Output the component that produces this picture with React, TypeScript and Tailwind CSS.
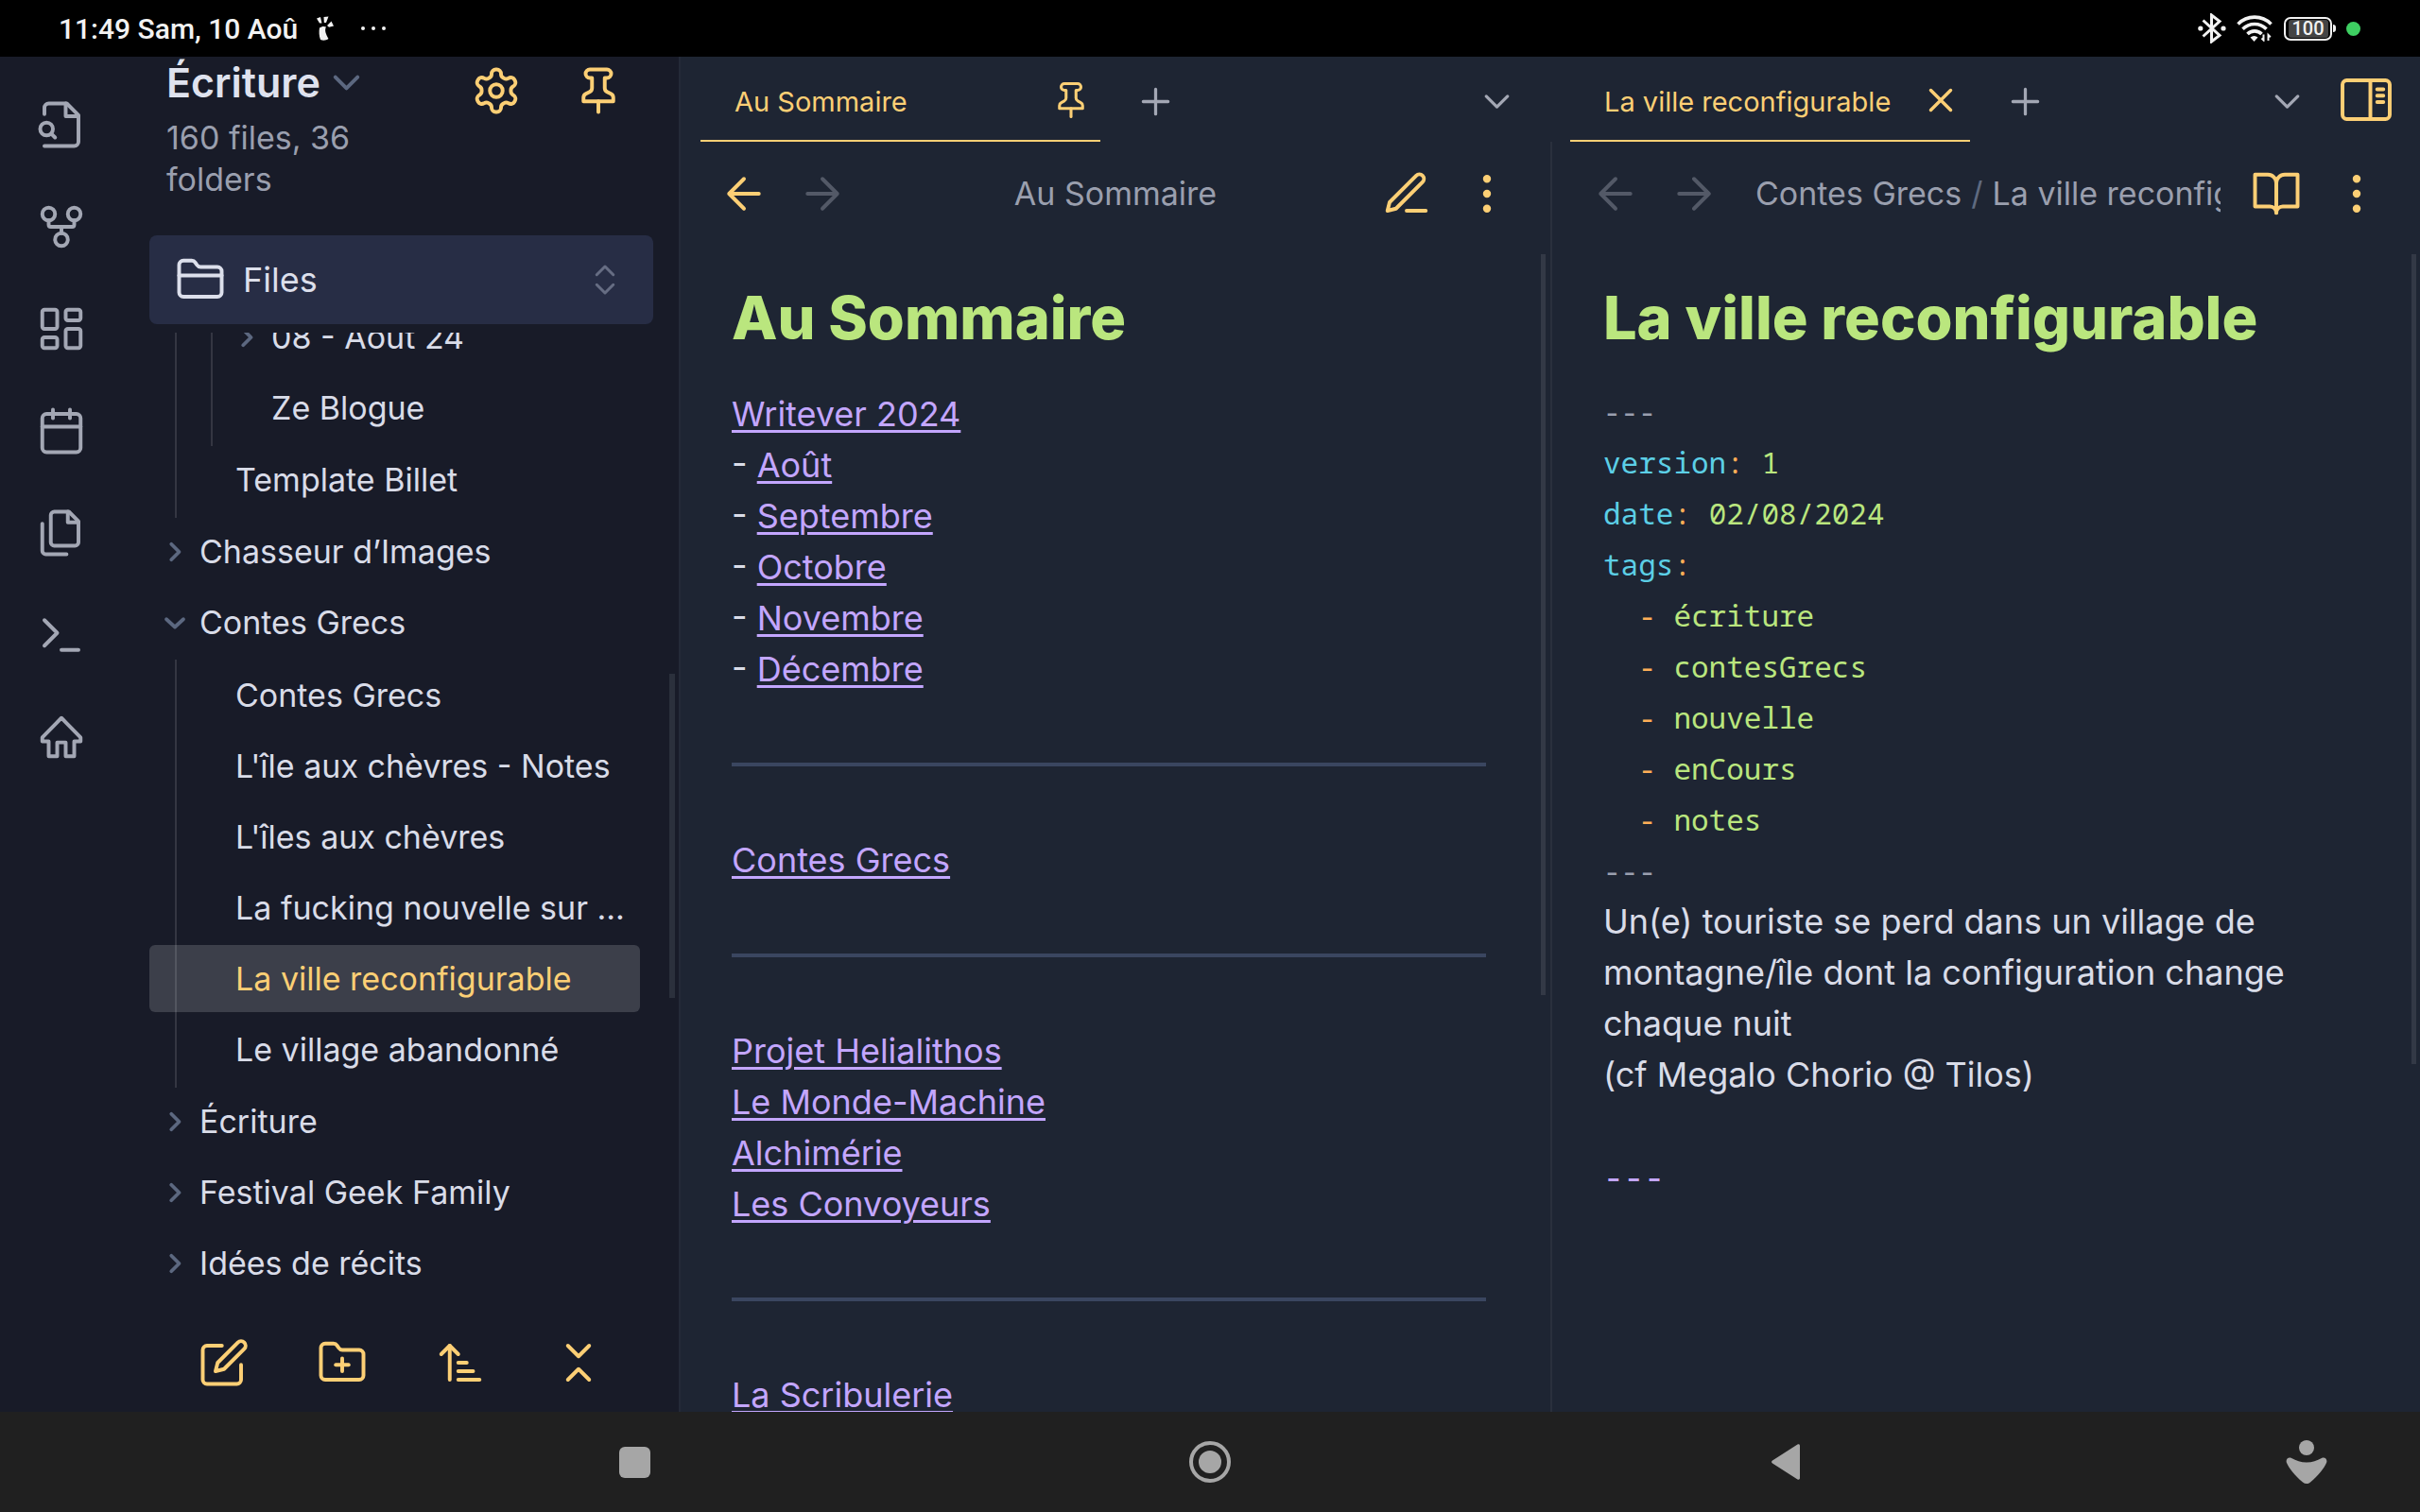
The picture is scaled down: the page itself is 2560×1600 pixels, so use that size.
import React from "react";

interface IIconProps {
  children: React.ReactNode;
  className?: string;
}

/**
 * 24-unit line icon, takes its colour from the parent
 */
function Icon({ children, className = "size-[54px]" }: IIconProps) {
  return (
    <svg
      viewBox="0 0 24 24"
      fill="none"
      stroke="currentColor"
      strokeWidth={1.75}
      strokeLinecap="round"
      strokeLinejoin="round"
      aria-hidden="true"
      className={`shrink-0 ${className}`}
    >
      {children}
    </svg>
  );
}

const pinPath = (
  <>
    <path d="M12 17v5" />
    <path d="M5 17h14v-1.76a2 2 0 0 0-1.11-1.79l-1.78-.9A2 2 0 0 1 15 10.76V6h1a2 2 0 0 0 0-4H8a2 2 0 0 0 0 4h1v4.76a2 2 0 0 1-1.11 1.79l-1.78.9A2 2 0 0 0 5 15.24Z" />
  </>
);

const ribbonItems = [
  {
    label: "Quick switcher",
    icon: (
      <>
        <path d="M4 22h14a2 2 0 0 0 2-2V7.5L14.5 2H6a2 2 0 0 0-2 2v3" />
        <path d="M14 2v6h6" />
        <path d="M5 17a3 3 0 1 0 0-6 3 3 0 0 0 0 6Z" />
        <path d="m9 18-1.5-1.5" />
      </>
    ),
  },
  {
    label: "Graph view",
    icon: (
      <>
        <circle cx="12" cy="18" r="3" />
        <circle cx="6" cy="6" r="3" />
        <circle cx="18" cy="6" r="3" />
        <path d="M18 9v2c0 .6-.4 1-1 1H7c-.6 0-1-.4-1-1V9" />
        <path d="M12 12v3" />
      </>
    ),
  },
  {
    label: "Canvas",
    icon: (
      <>
        <rect x="3" y="3" width="7" height="9" rx="1" />
        <rect x="14" y="3" width="7" height="5" rx="1" />
        <rect x="14" y="12" width="7" height="9" rx="1" />
        <rect x="3" y="16" width="7" height="5" rx="1" />
      </>
    ),
  },
  {
    label: "Daily note",
    icon: (
      <>
        <rect x="3" y="4" width="18" height="18" rx="2" />
        <path d="M16 2v4" />
        <path d="M8 2v4" />
        <path d="M3 10h18" />
      </>
    ),
  },
  {
    label: "Templates",
    icon: (
      <>
        <path d="M15.5 2H8.6c-.4 0-.8.2-1.1.5-.3.3-.5.7-.5 1.1v12.8c0 .4.2.8.5 1.1.3.3.7.5 1.1.5h9.8c.4 0 .8-.2 1.1-.5.3-.3.5-.7.5-1.1V6.5L15.5 2z" />
        <path d="M3 7.6v12.8c0 .4.2.8.5 1.1.3.3.7.5 1.1.5h9.8" />
        <path d="M15 2v5h5" />
      </>
    ),
  },
  {
    label: "Command palette",
    icon: (
      <>
        <path d="m4 17 6-6-6-6" />
        <path d="M12 19h8" />
      </>
    ),
  },
  {
    label: "Home",
    icon: <path d="M12 3 3 12.2V14h3v7h4v-6.5h4V21h4v-7h3v-1.8Z" />,
  },
];

const sidebarActions = [
  {
    label: "New note",
    icon: (
      <>
        <path d="M11 4H4a2 2 0 0 0-2 2v14a2 2 0 0 0 2 2h14a2 2 0 0 0 2-2v-7" />
        <path d="M18.5 2.5a2.12 2.12 0 0 1 3 3L12 15l-4 1 1-4Z" />
      </>
    ),
  },
  {
    label: "New folder",
    icon: (
      <>
        <path d="M4 20h16a2 2 0 0 0 2-2V8a2 2 0 0 0-2-2h-7.93a2 2 0 0 1-1.66-.9l-.82-1.2A2 2 0 0 0 7.93 3H4a2 2 0 0 0-2 2v13c0 1.1.9 2 2 2Z" />
        <path d="M12 10v6" />
        <path d="M9 13h6" />
      </>
    ),
  },
  {
    label: "Sort order",
    icon: (
      <>
        <path d="m3 8 4-4 4 4" />
        <path d="M7 4v16" />
        <path d="M11 12h4" />
        <path d="M11 16h7" />
        <path d="M11 20h10" />
      </>
    ),
  },
  {
    label: "Collapse all",
    icon: (
      <>
        <path d="m7 20 5-5 5 5" />
        <path d="m7 4 5 5 5-5" />
      </>
    ),
  },
];

function StatusBar() {
  return (
    <header className="flex h-[60px] shrink-0 items-center justify-between bg-black pr-[63px] pl-[62px] font-['Roboto',sans-serif] text-[30px] text-[#f2f2f2]">
      <div className="flex items-center">
        <span className="font-medium">11:49 Sam, 10 Aoû</span>
        <svg viewBox="0 0 18 26" fill="#f2f2f2" aria-hidden="true" className="ml-5 h-[26px] w-[18px]">
          <path d="M0 2.500 4 1l1.500 6.500H3zM7.500 1l5-.5L10 7H7.800zM11 10 15.500 5.500 18 10.500l-5 1.200z" />
          <path d="M3 12.500c2-1.500 4.500-2 7-1-2 3.500-.3 7.500 2.500 12.500-2.500 2-6 2-8.500 1C2.500 21 2.300 16.500 3 12.500Z" />
        </svg>
        <svg viewBox="0 0 28 4" fill="#f2f2f2" aria-hidden="true" className="ml-[29px] h-1 w-7">
          <circle cx="2" cy="2" r="2" />
          <circle cx="13" cy="2" r="2" />
          <circle cx="24" cy="2" r="2" />
        </svg>
      </div>
      <div className="flex items-center">
        <svg viewBox="0 0 30 32" fill="none" stroke="#f2f2f2" strokeWidth="3" aria-hidden="true" className="h-8 w-[30px]">
          <path d="M5.500 7.500 23 23.500l-8.500 6.500V2L23 8.500 5.500 24.500" />
          <circle cx="2.800" cy="16" r="2.600" fill="#f2f2f2" stroke="none" />
          <circle cx="27" cy="16" r="2.600" fill="#f2f2f2" stroke="none" />
        </svg>
        <svg viewBox="0 0 38 28" fill="none" stroke="#f2f2f2" strokeWidth="3.600" aria-hidden="true" className="ml-[11px] h-7 w-[38px]">
          <path d="M1.500 9.500a24.500 24.500 0 0 1 35 0" />
          <path d="M6.500 14.800a17.500 17.500 0 0 1 25 0" />
          <path d="M11.500 20a10.500 10.500 0 0 1 15 0" />
          <path d="M14.500 23.500a6.500 6.500 0 0 1 8 0L18.500 28z" fill="#f2f2f2" stroke="none" />
          <path d="M28.500 20.500v6l-2-2M33.500 27v-6l2.300 2.300" strokeWidth="2" />
        </svg>
        <span className="ml-3 flex h-[25px] w-[51px] items-center justify-center rounded-[7px] border-2 border-[#f2f2f2]">
          <span className="flex h-[19px] w-[42px] items-center justify-center rounded-[3px] bg-[#444] text-[20px] font-medium">
            100
          </span>
        </span>
        <span className="ml-px h-2 w-[3px] rounded-r-sm bg-[#f2f2f2]" />
        <span className="ml-[11px] size-[15px] rounded-full bg-[#3ecf62]" />
      </div>
    </header>
  );
}

function Ribbon() {
  return (
    <nav aria-label="Ribbon" className="flex w-[130px] shrink-0 flex-col pt-[18px] text-[#a3a7b4]">
      {ribbonItems.map((item) => (
        <button key={item.label} aria-label={item.label} className="flex h-[108px] items-center justify-center">
          <Icon>{item.icon}</Icon>
        </button>
      ))}
    </nav>
  );
}

interface ITreeItemProps {
  name: string;
  depth?: number;
  kind?: "file" | "closed" | "open";
  active?: boolean;
}

const indents = ["pl-[9px]", "pl-[47px]", "pl-[85px]"];

function TreeItem({ name, depth = 0, kind = "file", active }: ITreeItemProps) {
  return (
    <button
      className={`mb-1 flex h-[71px] w-full items-center gap-2 rounded-md pr-3 text-left whitespace-nowrap ${indents[depth]} ${
        active ? "bg-[#3c3f4a] text-[#fccf75]" : ""
      }`}
    >
      <span className="flex w-9 shrink-0 justify-center text-[#5c6880]">
        {kind !== "file" && (
          <Icon className="size-9">
            <path
              d={kind === "open" ? "m6 9.5 6 5.5 6-5.5" : "m9.5 6.500 5.500 5.500-5.500 5.500"}
              strokeWidth={2.5}
            />
          </Icon>
        )}
      </span>
      <span className="truncate">{name}</span>
    </button>
  );
}

interface ITreeGroupProps {
  children: React.ReactNode;
  depth: number;
}

const guides = ["left-[27px]", "left-[65px]"];

/**
 * Children of an open folder, with the indentation guide drawn over them
 */
function TreeGroup({ children, depth }: ITreeGroupProps) {
  return (
    <div className="relative pt-0.5 pb-px">
      {children}
      <span className={`absolute inset-y-0 w-0.5 bg-white/12 ${guides[depth]}`} />
    </div>
  );
}

function Sidebar() {
  return (
    <aside className="relative flex w-[590px] shrink-0 flex-col border-r-2 border-[#242a38] pr-[27px] pl-7">
      <div className="flex items-start pr-1 pl-[18px]">
        <div className="flex-1">
          <button className="flex h-[54px] items-center gap-1 text-[43px] font-semibold text-[#dfe2ee]">
            Écriture
            <Icon className="size-[47px] text-[#5c6880]">
              <path d="m6 9 6 6 6-6" strokeWidth={2} />
            </Icon>
          </button>
          <p className="mt-[10px] text-[34px] leading-[44px] text-[#9a9fae]">160 files, 36 folders</p>
        </div>
        <div className="flex text-[#fccf75]">
          <button aria-label="Settings" className="flex h-[72px] w-[108px] items-center justify-center">
            <Icon>
              <path d="M12.22 2h-.44a2 2 0 0 0-2 2v.18a2 2 0 0 1-1 1.73l-.43.25a2 2 0 0 1-2 0l-.15-.08a2 2 0 0 0-2.73.73l-.22.38a2 2 0 0 0 .73 2.73l.15.1a2 2 0 0 1 1 1.72v.51a2 2 0 0 1-1 1.74l-.15.09a2 2 0 0 0-.73 2.73l.22.38a2 2 0 0 0 2.73.73l.15-.08a2 2 0 0 1 2 0l.43.25a2 2 0 0 1 1 1.73V20a2 2 0 0 0 2 2h.44a2 2 0 0 0 2-2v-.18a2 2 0 0 1 1-1.73l.43-.25a2 2 0 0 1 2 0l.15.08a2 2 0 0 0 2.73-.73l.22-.39a2 2 0 0 0-.73-2.73l-.15-.08a2 2 0 0 1-1-1.74v-.5a2 2 0 0 1 1-1.74l.15-.09a2 2 0 0 0 .73-2.73l-.22-.38a2 2 0 0 0-2.73-.73l-.15.08a2 2 0 0 1-2 0l-.43-.25a2 2 0 0 1-1-1.73V4a2 2 0 0 0-2-2z" />
              <circle cx="12" cy="12" r="3" />
            </Icon>
          </button>
          <button aria-label="Pin sidebar" className="flex h-[72px] w-[108px] items-center justify-center">
            <Icon>{pinPath}</Icon>
          </button>
        </div>
      </div>

      <button className="mt-[37px] flex h-[94px] shrink-0 items-center rounded-lg bg-[#272d45] pr-[30px] pl-[27px] text-[36px] text-[#dcdfeb]">
        <Icon>
          <path d="M20 20a2 2 0 0 0 2-2V8a2 2 0 0 0-2-2h-7.900a2 2 0 0 1-1.690-.9L9.600 3.900A2 2 0 0 0 7.930 3H4a2 2 0 0 0-2 2v13a2 2 0 0 0 2 2Z" />
          <path d="M2 10h20" />
        </Icon>
        <span className="ml-[18px] flex-1 text-left">Files</span>
        <Icon className="size-[42px] text-[#666d83]">
          <path d="m7 15 5 5 5-5" />
          <path d="m7 9 5-5 5 5" />
        </Icon>
      </button>

      {/* the list is scrolled, so its first row is cut by the top edge */}
      <div className="mt-[9px] flex min-h-0 flex-1 flex-col overflow-hidden pr-[14px] text-[34px] text-[#d9dce8]">
        <div className="-mt-[35px] flex shrink-0 flex-col">
          <TreeGroup depth={0}>
            <TreeGroup depth={1}>
              <TreeItem name="08 - Août 24" depth={2} kind="closed" />
              <TreeItem name="Ze Blogue" depth={2} />
            </TreeGroup>
            <TreeItem name="Template Billet" depth={1} />
          </TreeGroup>
          <TreeItem name="Chasseur d’Images" kind="closed" />
          <TreeItem name="Contes Grecs" kind="open" />
          <TreeGroup depth={0}>
            <TreeItem name="Contes Grecs" depth={1} />
            <TreeItem name="L'île aux chèvres - Notes" depth={1} />
            <TreeItem name="L'îles aux chèvres" depth={1} />
            <TreeItem name="La fucking nouvelle sur ..." depth={1} />
            <TreeItem name="La ville reconfigurable" depth={1} active />
            <TreeItem name="Le village abandonné" depth={1} />
          </TreeGroup>
          <TreeItem name="Écriture" kind="closed" />
          <TreeItem name="Festival Geek Family" kind="closed" />
          <TreeItem name="Idées de récits" kind="closed" />
        </div>
      </div>

      <div className="grid h-[104px] shrink-0 grid-cols-4 px-4 text-[#fccf75]">
        {sidebarActions.map((action) => (
          <button key={action.label} aria-label={action.label} className="flex items-center justify-center">
            <Icon>{action.icon}</Icon>
          </button>
        ))}
      </div>
      <span className="absolute top-[653px] right-1 h-[343px] w-[6px] bg-[#2b303c]" />
    </aside>
  );
}

interface ITabBarProps {
  title: string;
  pinned?: boolean;
  children?: React.ReactNode;
}

function TabBar({ title, pinned, children }: ITabBarProps) {
  return (
    <div className="flex h-[90px] shrink-0 items-stretch pl-[21px] text-[#a3a7b4]">
      <div className="flex w-[423px] items-center justify-between border-b-2 border-[#fccf75] pr-[10px] pl-9 text-[29px] text-[#fccf75]">
        <span className="pt-2">{title}</span>
        <button aria-label={pinned ? "Unpin" : "Close"} className="pt-1">
          <Icon className="size-[42px]">{pinned ? pinPath : <path d="M18 6 6 18M6 6l12 12" strokeWidth={2} />}</Icon>
        </button>
      </div>
      <button aria-label="New tab" className="ml-9 pt-1">
        <Icon className="size-[45px]">
          <path d="M5 12h14M12 5v14" />
        </Icon>
      </button>
      <button aria-label="Tab list" className="mr-[34px] ml-auto pt-1">
        <Icon className="size-[45px]">
          <path d="m6 9 6 6 6-6" />
        </Icon>
      </button>
      {children}
    </div>
  );
}

interface IViewHeaderProps {
  children: React.ReactNode;
  canGoBack?: boolean;
  action: string;
  actionIcon: React.ReactNode;
}

function ViewHeader({ children, canGoBack, action, actionIcon }: IViewHeaderProps) {
  return (
    <div className="flex h-[110px] shrink-0 items-center px-[25px] text-[#fccf75]">
      <button aria-label="Back" className={`flex w-[83px] justify-center ${canGoBack ? "" : "text-[#535967]"}`}>
        <Icon>
          <path d="m12 19-7-7 7-7M19 12H5" />
        </Icon>
      </button>
      <button aria-label="Forward" className="flex w-[83px] justify-center text-[#535967]">
        <Icon>
          <path d="M5 12h14M12 5l7 7-7 7" />
        </Icon>
      </button>
      <div className="mr-4 ml-6 flex min-w-0 flex-1 gap-[10px] overflow-hidden text-[34px] whitespace-nowrap text-[#9a9fae]">
        {children}
      </div>
      <button aria-label={action} className="flex w-[85px] justify-center">
        <Icon>{actionIcon}</Icon>
      </button>
      <button aria-label="More options" className="flex w-[85px] justify-center">
        <Icon>
          <g fill="currentColor">
            <circle cx="12" cy="5" r="1" />
            <circle cx="12" cy="12" r="1" />
            <circle cx="12" cy="19" r="1" />
          </g>
        </Icon>
      </button>
    </div>
  );
}

function NoteLink({ children }: { children: React.ReactNode }) {
  return (
    <a href="#" className="text-[#c3a6ff] underline decoration-[3px] underline-offset-4">
      {children}
    </a>
  );
}

const months = ["Août", "Septembre", "Octobre", "Novembre", "Décembre"];
const projects = ["Projet Helialithos", "Le Monde-Machine", "Alchimérie", "Les Convoyeurs"];
const tags = ["écriture", "contesGrecs", "nouvelle", "enCours", "notes"];

function Rule() {
  return <hr className="my-[72px] h-1 border-0 bg-[#3a4660]" />;
}

function SummaryLeaf() {
  return (
    <section className="flex min-w-0 flex-1 flex-col">
      <TabBar title="Au Sommaire" pinned />
      <div className="relative flex min-h-0 flex-1 flex-col">
        <ViewHeader
          canGoBack
          action="Edit"
          actionIcon={
            <>
              <path d="M12 20h9" />
              <path d="M16.5 3.5a2.12 2.12 0 0 1 3 3L7 19l-4 1 1-4Z" />
            </>
          }
        >
          <span className="w-full pr-1 text-center">Au Sommaire</span>
        </ViewHeader>
        <article className="min-h-0 flex-1 overflow-hidden pr-[68px] pl-[54px]">
          <h1 className="mt-[37px] mb-9 text-[63px] leading-[78px] font-extrabold text-[#bae67e]">Au Sommaire</h1>
          <p>
            <NoteLink>Writever 2024</NoteLink>
          </p>
          {months.map((month) => (
            <p key={month}>
              - <NoteLink>{month}</NoteLink>
            </p>
          ))}
          <Rule />
          <p>
            <NoteLink>Contes Grecs</NoteLink>
          </p>
          <Rule />
          {projects.map((project) => (
            <p key={project}>
              <NoteLink>{project}</NoteLink>
            </p>
          ))}
          <Rule />
          <p>
            <NoteLink>La Scribulerie</NoteLink>
          </p>
        </article>
        <span className="absolute top-[119px] right-[5px] h-[784px] w-[5px] bg-[#333946]" />
      </div>
    </section>
  );
}

function YamlLine({ name, value }: { name: string; value?: string }) {
  return (
    <p>
      <span className="text-[#5ccfe6]">{name}</span>
      <span className="text-[#ffae57]">:</span> {value}
    </p>
  );
}

function CityLeaf() {
  return (
    <section className="flex min-w-0 flex-1 flex-col">
      <TabBar title="La ville reconfigurable">
        <button aria-label="Toggle right sidebar" className="mr-[30px] text-[#fccf75]">
          <svg
            viewBox="0 0 24 20"
            fill="none"
            stroke="currentColor"
            strokeWidth="1.75"
            strokeLinecap="round"
            aria-hidden="true"
            className="h-[45px] w-[54px]"
          >
            <rect x=".9" y=".9" width="22.2" height="18.2" rx="2" />
            <path d="M14 1v18M17.200 5.100h2.900M17.200 8.100h2.900M17.200 11.100h2.900" />
          </svg>
        </button>
      </TabBar>
      <div className="relative flex min-h-0 flex-1 flex-col border-l-2 border-[#2a303d]">
        <ViewHeader
          action="Read"
          actionIcon={
            <>
              <path d="M2 3h6a4 4 0 0 1 4 4v14a3 3 0 0 0-3-3H2z" />
              <path d="M22 3h-6a4 4 0 0 0-4 4v14a3 3 0 0 1 3-3h7z" />
            </>
          }
        >
          <span>Contes Grecs</span>
          <span className="text-[#5f6a80]">/</span>
          <span>La ville reconfigurable</span>
        </ViewHeader>
        <article className="min-h-0 flex-1 overflow-hidden pr-[68px] pl-[54px]">
          <h1 className="mt-[37px] mb-[33px] text-[63px] leading-[78px] font-extrabold text-[#bae67e]">
            La ville reconfigurable
          </h1>
          <div className="font-['Noto_Sans_Mono','DejaVu_Sans_Mono',monospace] text-[31px] leading-[54px] text-[#bae67e]">
            <p className="text-[#9a9fae]">---</p>
            <YamlLine name="version" value="1" />
            <YamlLine name="date" value="02/08/2024" />
            <YamlLine name="tags" />
            {tags.map((tag) => (
              <p key={tag} className="whitespace-pre">
                {"  "}
                <span className="text-[#ffae57]">-</span> {tag}
              </p>
            ))}
            <p className="text-[#9a9fae]">---</p>
          </div>
          <p>Un(e) touriste se perd dans un village de montagne/île dont la configuration change chaque nuit</p>
          <p>(cf Megalo Chorio @ Tilos)</p>
          <p className="mt-[54px] font-['Noto_Sans_Mono','DejaVu_Sans_Mono',monospace] text-[#c3a6ff]">---</p>
        </article>
        <span className="absolute top-[119px] right-1 h-[857px] w-[5px] bg-[#333946]" />
      </div>
    </section>
  );
}

function NavigationBar() {
  return (
    <nav
      aria-label="System"
      className="grid h-[106px] shrink-0 grid-cols-[1fr_609px_609px_609px_1fr] items-center justify-items-center bg-[#202020] text-[#a6a6a6]"
    >
      <button aria-label="Recent apps" className="col-start-2 size-[33px] rounded-md bg-[#a6a6a6]" />
      <button aria-label="Home" className="flex size-11 items-center justify-center rounded-full border-4 border-[#a6a6a6]">
        <span className="size-6 rounded-full bg-[#a6a6a6]" />
      </button>
      <button aria-label="Back">
        <svg viewBox="0 0 30 38" fill="currentColor" aria-hidden="true" className="h-[38px] w-[30px]">
          <path d="M27.500.6C29 0 30 .6 30 2v34c0 1.400-1 2-2.500 1.400L1 20.500c-1.300-.8-1.300-2.200 0-3z" />
        </svg>
      </button>
      <button aria-label="Accessibility" className="mr-[98px] justify-self-end">
        <svg viewBox="0 0 44 46" fill="currentColor" aria-hidden="true" className="h-[46px] w-11">
          <circle cx="22" cy="8" r="8" />
          <path d="M1 24c-1.500-3.500 1.500-6.500 5-5 5 2.500 10 4.500 16 4.500s11-2 16-4.500c3.500-1.500 6.500 1.500 5 5-2 5-9 14-17 20.500-2.500 2-5.500 2-8 0C10 38 3 29 1 24Z" />
        </svg>
      </button>
    </nav>
  );
}

export default function App() {
  return (
    <div className="flex h-screen flex-col overflow-hidden bg-[#181b28] font-['Inter',sans-serif]">
      <StatusBar />
      <main className="flex min-h-0 flex-1">
        <Ribbon />
        <Sidebar />
        <div className="flex min-w-0 flex-1 bg-[#1e2533] text-[36px] leading-[54px] text-[#d9dce8]">
          <SummaryLeaf />
          <CityLeaf />
        </div>
      </main>
      <NavigationBar />
    </div>
  );
}
